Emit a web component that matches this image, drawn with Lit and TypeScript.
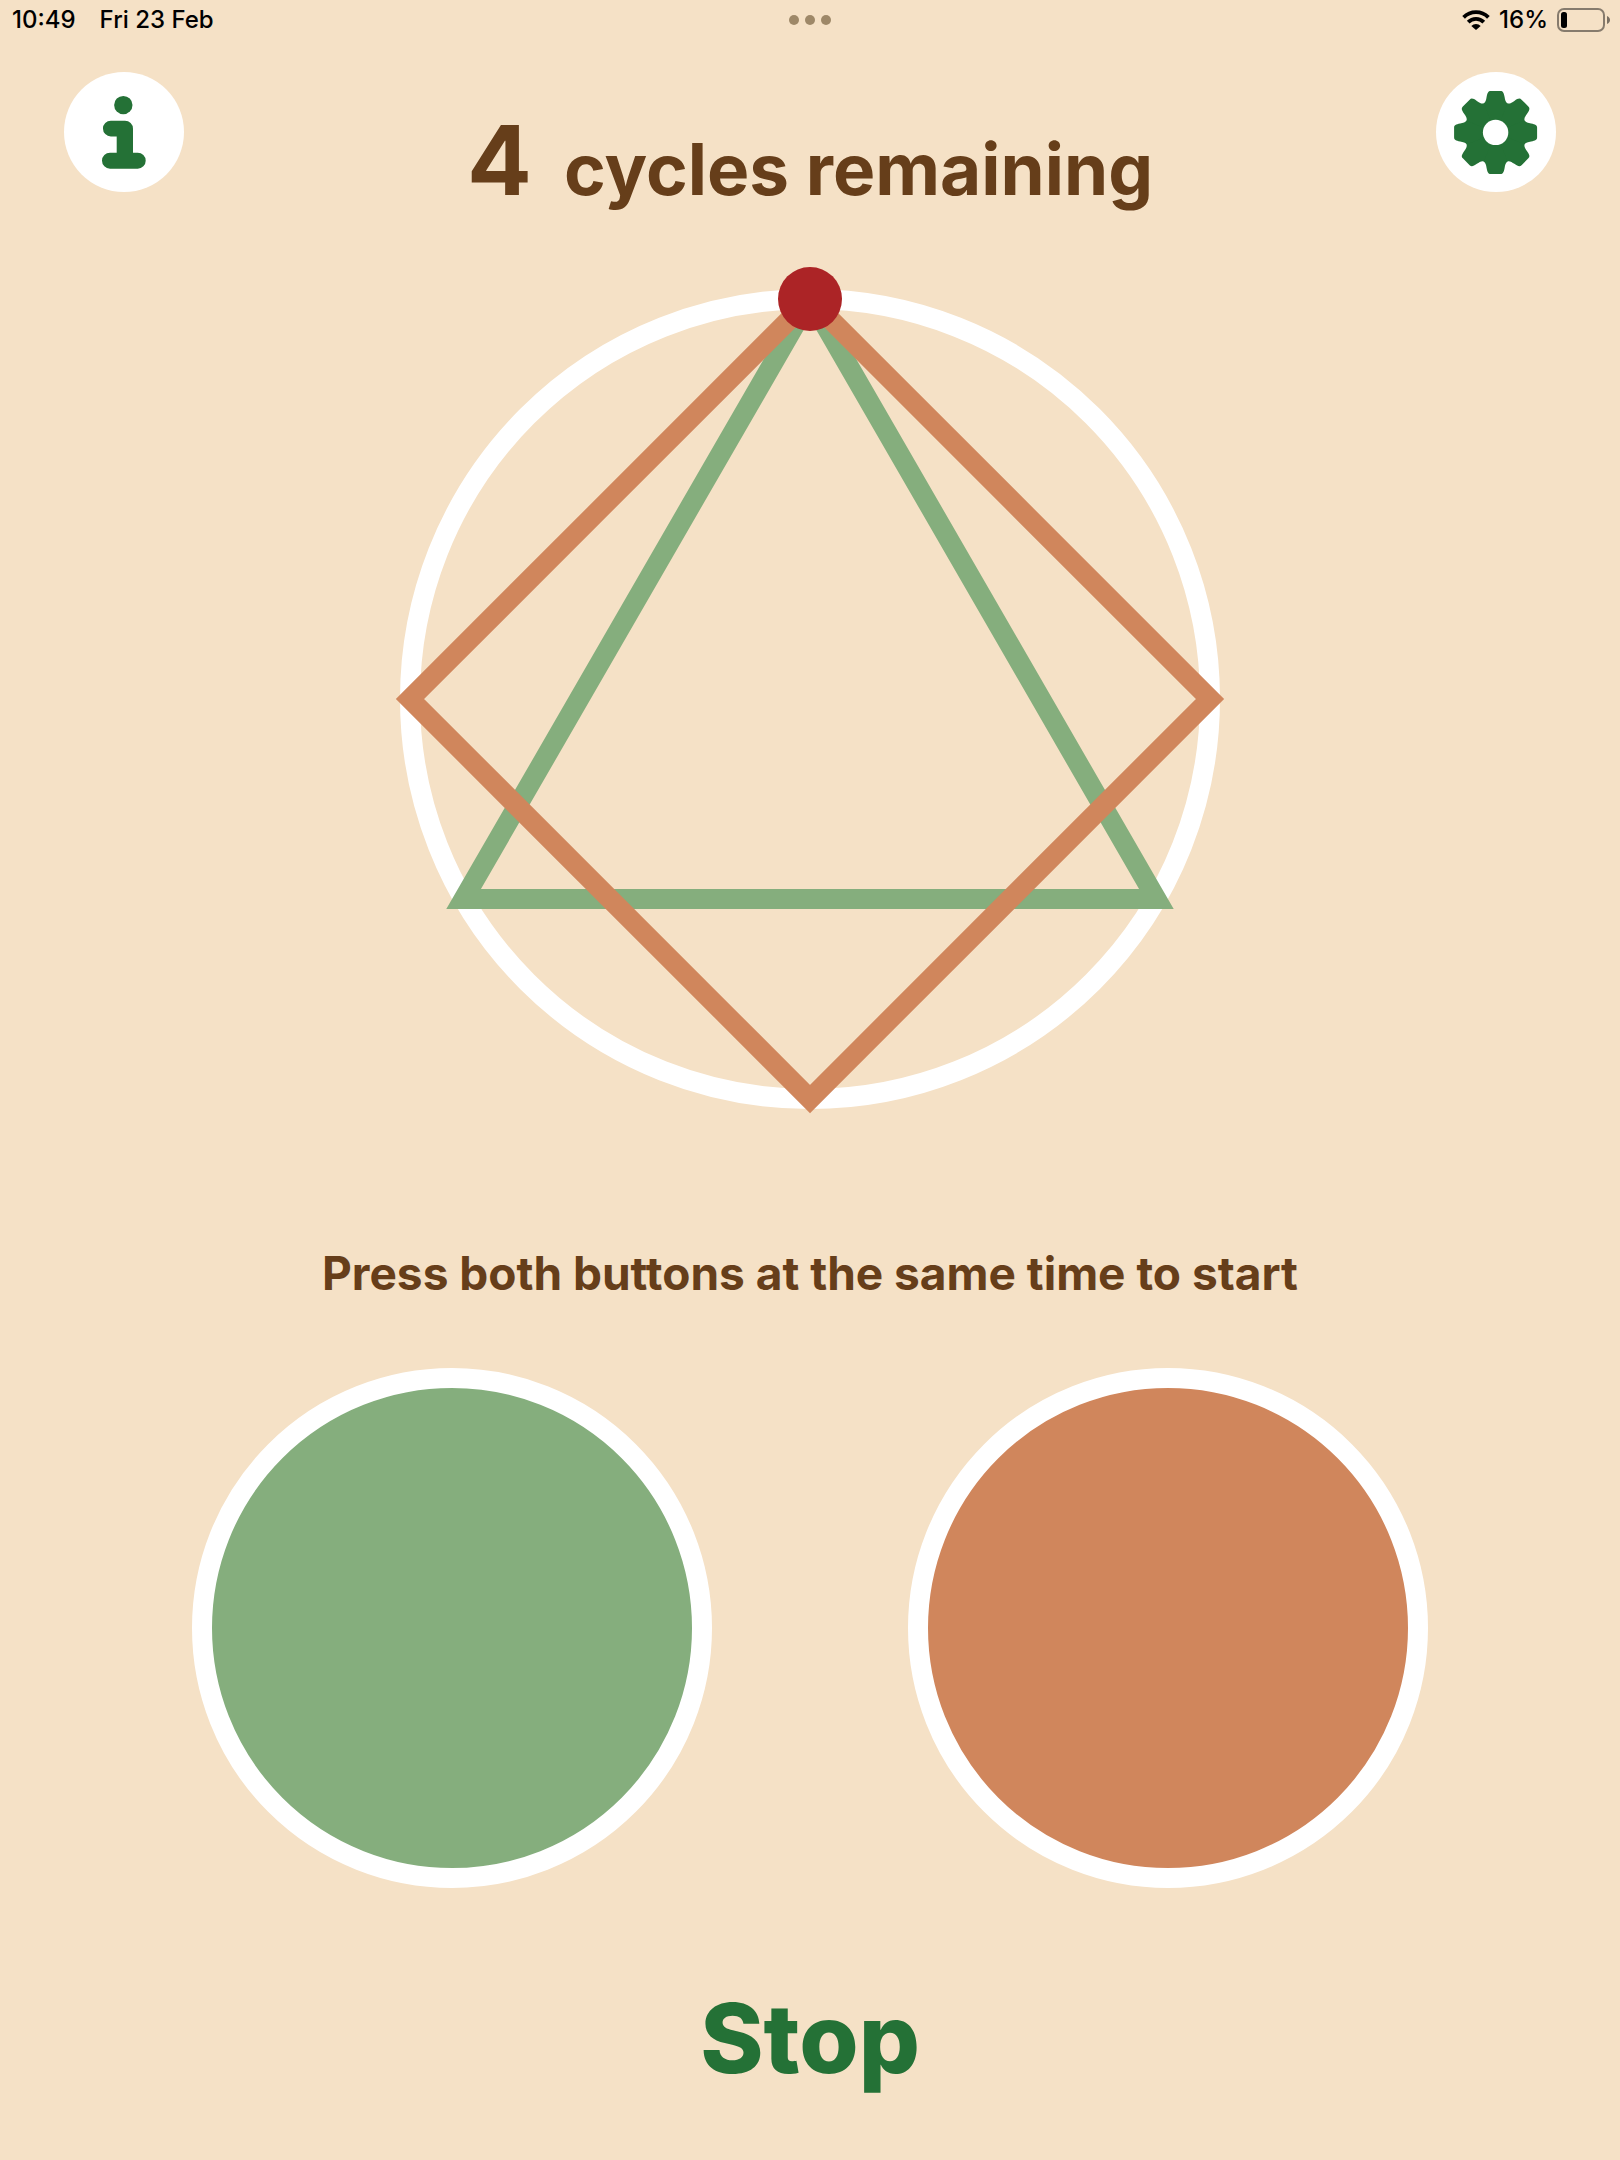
import { LitElement, html, svg, css } from "lit";
import { customElement, property, state } from "lit/decorators.js";

const TOOTH =
  "M0 0L-12.2 -28.8C-10 -30 -9.5 -32.5 -9 -35.5C-8.2 -39.8 -7.4 -41.5 -4.8 -41.5H4.8C7.4 -41.5 8.2 -39.8 9 -35.5C9.5 -32.5 10 -30 12.2 -28.8Z";
const TEETH = [0, 45, 90, 135, 180, 225, 270, 315];

@customElement("status-bar")
export class StatusBar extends LitElement {
  static styles = css`
    :host {
      display: grid;
      grid-template-columns: 1fr auto 1fr;
      align-items: center;
      height: 40px;
      padding: 0 9px;
      color: #000;
      font: 500 24px/40px Inter, "Liberation Sans", sans-serif;
    }
    .left {
      display: flex;
      gap: 24px;
      padding-left: 3px;
    }
    .right {
      display: flex;
      align-items: center;
      justify-content: flex-end;
      gap: 9px;
    }
    svg {
      display: block;
    }
  `;

  render() {
    return html`
      <div class="left"><span>10:49</span><span>Fri 23 Feb</span></div>
      <svg width="42" height="10" viewBox="0 0 42 10" fill="#9e8868" aria-hidden="true">
        <circle cx="5" cy="5" r="5" />
        <circle cx="21" cy="5" r="5" />
        <circle cx="37" cy="5" r="5" />
      </svg>
      <div class="right">
        <svg width="28" height="20" viewBox="0 0 28 20" aria-hidden="true">
          <g fill="none" stroke="#000" stroke-width="3.8">
            <path d="M1.6 7.3A17.6 17.6 0 0 1 26.4 7.3" />
            <path d="M6.2 12.2A11 11 0 0 1 21.8 12.2" />
          </g>
          <path d="M14 19.9L9.3 15.9A6.5 6.5 0 0 1 18.7 15.9Z" />
        </svg>
        <span>16%</span>
        <svg width="54" height="24" viewBox="0 0 54 24" aria-hidden="true">
          <rect x="1" y="1" width="46" height="22" rx="6" fill="none" stroke="#000" stroke-opacity=".45" stroke-width="2" />
          <rect x="4" y="4" width="6" height="16" rx="2.5" />
          <path d="M50 8C54 9.5 54 14.5 50 16Z" fill-opacity=".5" />
        </svg>
      </div>
    `;
  }
}

@customElement("rhythm-figure")
export class RhythmFigure extends LitElement {
  static styles = css`
    :host {
      display: block;
    }
    svg {
      display: block;
      width: 100%;
      overflow: visible;
    }
    .ring {
      stroke: #fff;
    }
    .three {
      stroke: #85ae7d;
    }
    .four {
      stroke: #d0865c;
    }
    .dot {
      fill: #ac2426;
    }
  `;

  @property({ type: Number }) radius = 400;

  private polygon(sides: number) {
    return Array.from({ length: sides }, (_, i) => {
      const a = (i * 2 * Math.PI) / sides;
      const x = 414 + this.radius * Math.sin(a);
      const y = 432 - this.radius * Math.cos(a);
      return `${x.toFixed(1)},${y.toFixed(1)}`;
    }).join(" ");
  }

  render() {
    return html`
      <svg viewBox="0 0 828 846" role="img" aria-label="Three against four">
        <g fill="none" stroke-width="20">
          <circle class="ring" cx="414" cy="432" r=${this.radius} />
          <polygon class="three" points=${this.polygon(3)} />
          <polygon class="four" points=${this.polygon(4)} />
        </g>
        <circle class="dot" cx="414" cy="32" r="32" />
      </svg>
    `;
  }
}

@customElement("app-root")
export class AppRoot extends LitElement {
  static styles = css`
    :host {
      display: flex;
      flex-direction: column;
      box-sizing: border-box;
      min-height: 100vh;
      background: #f5e1c6;
      color: #663e1a;
      font-family: Inter, "Liberation Sans", sans-serif;
    }
    button {
      padding: 0;
      border: 0;
      font: inherit;
      cursor: pointer;
    }
    header {
      display: flex;
      justify-content: space-between;
      align-items: flex-start;
      padding: 32px 64px 0;
    }
    .round {
      width: 120px;
      height: 120px;
      border-radius: 50%;
      background: #fff;
      color: #247136;
    }
    .round svg {
      display: block;
      fill: currentColor;
    }
    h1 {
      display: flex;
      align-items: baseline;
      gap: 32px;
      margin: 28px 0 0;
      font-size: 71px;
      line-height: 120px;
      font-weight: 700;
      white-space: nowrap;
    }
    .count {
      font-size: 96px;
    }
    rhythm-figure {
      align-self: center;
      width: 100%;
      max-width: 828px;
      margin-top: 38px;
    }
    .hint {
      margin: 128px 0 0;
      text-align: center;
      font-size: 46px;
      line-height: 64px;
      font-weight: 700;
    }
    .pads {
      display: grid;
      grid-template-columns: 1fr 1fr;
      gap: 196px;
      margin: 63px 192px 0;
    }
    .pad {
      box-sizing: border-box;
      aspect-ratio: 1;
      border: 20px solid #fff;
      border-radius: 50%;
    }
    .green {
      background: #85ae7d;
    }
    .orange {
      background: #d0865c;
    }
    .stop {
      align-self: center;
      margin-top: 90px;
      background: none;
      color: #247136;
      font-size: 96px;
      line-height: 120px;
      font-weight: 800;
    }
  `;

  @state() private remaining = 4;

  render() {
    return html`
      <status-bar></status-bar>
      <header>
        <button class="round" aria-label="Information">
          <svg width="120" height="120" viewBox="0 0 120 120">
            <circle cx="59.3" cy="33.1" r="9.2" />
            <path
              d="M46.8 48.7H61a8 8 0 0 1 8 8V80.7H73.7a8 8 0 0 1 0 16H46a8 8 0 0 1 0-16H52.7V64.4H46.8a7.8 7.8 0 0 1 0-15.7z"
            />
          </svg>
        </button>
        <h1><span class="count">${this.remaining}</span><span>cycles remaining</span></h1>
        <button class="round" aria-label="Settings">
          <svg width="120" height="120" viewBox="0 0 120 120">
            <g transform="translate(59.6 60.4)">
              <circle r="30.5" />
              ${TEETH.map((a) => svg`<path d=${TOOTH} transform="rotate(${a})" />`)}
              <circle r="12.7" fill="#fff" />
            </g>
          </svg>
        </button>
      </header>
      <rhythm-figure></rhythm-figure>
      <p class="hint">Press both buttons at the same time to start</p>
      <div class="pads">
        <button class="pad green" aria-label="Green"></button>
        <button class="pad orange" aria-label="Orange"></button>
      </div>
      <button class="stop">Stop</button>
    `;
  }
}
